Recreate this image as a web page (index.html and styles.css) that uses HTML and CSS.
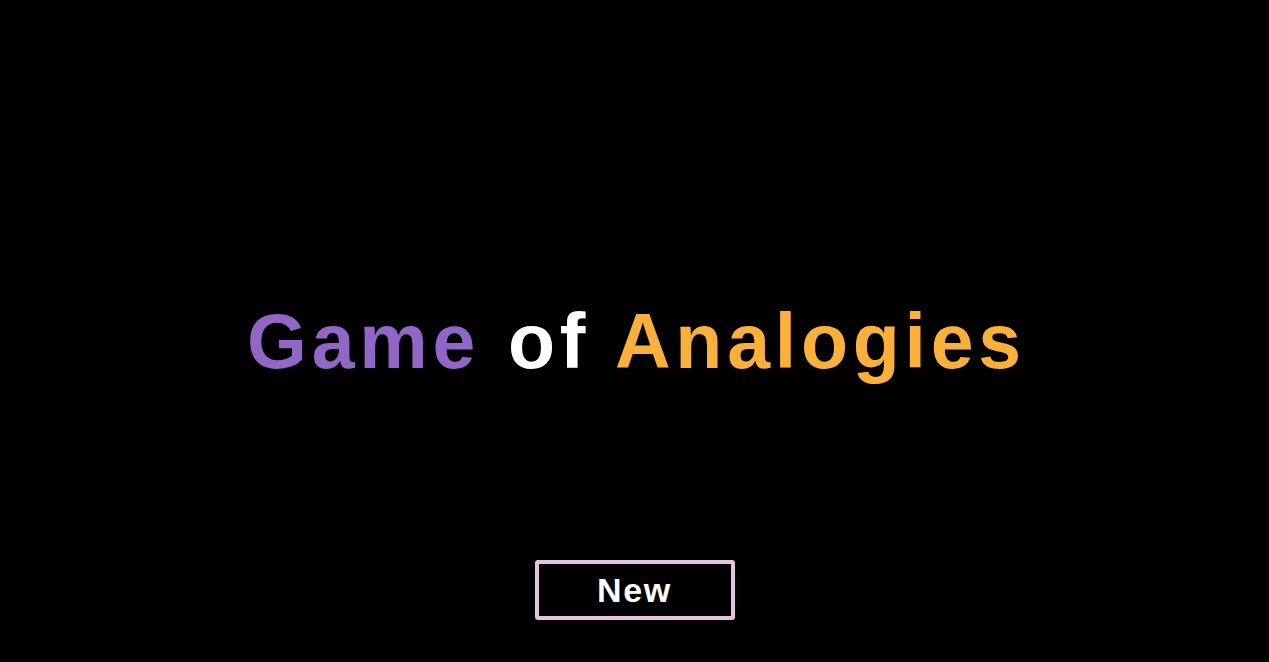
FILE: index.html
```html
<!DOCTYPE html>
<html lang="en">
<head>
<meta charset="utf-8">
<title>Game of Analogies</title>
<link rel="stylesheet" href="styles.css">
</head>
<body>
<main class="screen">
  <h1 class="title"><span class="game">Game</span> <span class="of">of</span> <span class="analogies">Analogies</span></h1>
  <button class="new-btn" type="button">New</button>
</main>
</body>
</html>
```
FILE: styles.css
```css
html, body {
  margin: 0;
  padding: 0;
  background: #000;
}
.screen {
  height: 662px;
  display: flex;
  flex-direction: column;
  align-items: center;
  box-sizing: border-box;
  padding-top: 301px;
}
.title {
  margin: 0;
  padding-left: 4px;
  font-family: "Liberation Sans", Arial, sans-serif;
  font-weight: 700;
  font-size: 77px;
  line-height: 80px;
  letter-spacing: 0.062em;
  word-spacing: 0.02em;
  white-space: nowrap;
}
.game { color: #9166c6; }
.of { color: #ffffff; }
.analogies { color: #fbb03b; }
.new-btn {
  margin-top: 179px;
  width: 200px;
  height: 60px;
  box-sizing: border-box;
  border: 4px solid #e6c3dc;
  border-radius: 3px;
  background: #000;
  color: #fff;
  font-family: "Liberation Sans", Arial, sans-serif;
  font-weight: 700;
  font-size: 34px;
  letter-spacing: 0.05em;
  cursor: pointer;
}
```
